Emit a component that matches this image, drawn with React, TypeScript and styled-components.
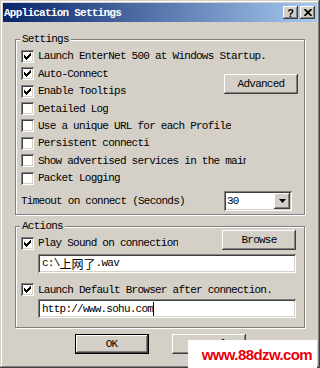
import React from "react";
import styled, { createGlobalStyle } from "styled-components";

const face = "#d4d0c8";
const shadow = "#808080";
const dark = "#404040";
const mono = `"Liberation Mono", "Noto Sans CJK SC", monospace`;

const raised = `box-shadow: inset -1px -1px ${dark}, inset 1px 1px #fff, inset -2px -2px ${shadow}, inset 2px 2px ${face};`;
const sunken = `box-shadow: inset 1px 1px ${shadow}, inset -1px -1px #fff, inset 2px 2px ${dark}, inset -2px -2px ${face};`;

const GlobalStyle = createGlobalStyle`
	html, body {
		margin: 0;
		padding: 0;
		background: #fff;
	}
`;

const Window = styled.div`
	position: relative;
	width: 320px;
	height: 368px;
	box-sizing: border-box;
	padding: 3px;
	display: flex;
	flex-direction: column;
	overflow: hidden;
	background: ${face};
	box-shadow: inset -1px -1px ${dark}, inset 1px 1px ${face}, inset -2px -2px ${shadow}, inset 2px 2px #fff;
	font-family: ${mono};
	font-size: 11px;
	letter-spacing: -0.75px;
	color: #000;
`;

const TitleBar = styled.div`
	height: 19px;
	flex: none;
	display: flex;
	align-items: center;
	padding: 0 2px 0 1px;
	background: linear-gradient(to right, #0a246a, #a6caf0);
	color: #fff;
	font-weight: bold;

	.caption {
		flex: 1;
	}
`;

const CaptionButton = styled.div`
	width: 15px;
	height: 13px;
	margin-left: 2px;
	display: flex;
	align-items: center;
	justify-content: center;
	background: ${face};
	${raised}
	color: #000;
	font-family: "Liberation Sans", sans-serif;
	font-weight: bold;
	font-size: 11px;
	letter-spacing: 0;
`;

const Body = styled.div`
	display: flex;
	flex-direction: column;
	padding: 0 12px;
`;

const GroupBox = styled.div<{ $top: number; $pb: number }>`
	margin-top: ${(p) => p.$top}px;
	padding: 0 8px ${(p) => p.$pb}px 5px;
	border: 1px solid ${shadow};
	box-shadow: inset 1px 1px #fff, 1px 1px #fff;
`;

const GroupLabel = styled.div`
	width: fit-content;
	margin: -7px 0 0 -1px;
	padding: 0 2px;
	line-height: 12px;
	background: ${face};
`;

const SettingsGrid = styled.div`
	display: grid;
	grid-template-columns: 1fr 74px;
	grid-auto-rows: 17.45px;
	margin-top: 2.5px;
	margin-right: -2px;

	.wide {
		grid-column: 1 / -1;
	}

	.side {
		grid-column: 2;
		grid-row: 2 / span 2;
		align-self: center;
		margin-top: 3px;
	}
`;

const CheckRow = styled.div`
	height: 17.45px;
	display: flex;
	align-items: center;
	white-space: nowrap;
	min-width: 0;
`;

const Box = styled.div`
	width: 13px;
	height: 13px;
	flex: none;
	margin-right: 4px;
	background: #fff;
	${sunken}

	svg {
		display: block;
	}
`;

const Label = styled.span<{ $clip?: number }>`
	white-space: nowrap;
	overflow: hidden;
	max-width: ${(p) => (p.$clip ? `${p.$clip}px` : "none")};
`;

const Button = styled.div<{ $default?: boolean }>`
	width: 74px;
	height: 20px;
	box-sizing: border-box;
	display: flex;
	align-items: center;
	justify-content: center;
	background: ${face};
	${raised}
	border: ${(p) => (p.$default ? "1px solid #000" : "none")};
`;

const TimeoutRow = styled.div`
	display: flex;
	align-items: center;
	justify-content: space-between;
	margin-top: 3.5px;
	padding-right: 4px;
`;

const Combo = styled.div`
	width: 68px;
	height: 20px;
	box-sizing: border-box;
	padding: 2px;
	display: flex;
	align-items: stretch;
	background: #fff;
	${sunken}

	.value {
		flex: 1;
		display: flex;
		align-items: center;
		padding-left: 1px;
	}
`;

const ArrowButton = styled.div`
	width: 16px;
	display: flex;
	align-items: center;
	justify-content: center;
	background: ${face};
	${raised}
`;

const ActionTop = styled.div`
	display: flex;
	align-items: flex-start;
	justify-content: space-between;
	margin-top: -2px;

	${CheckRow} {
		margin-top: 5px;
	}
`;

const TextBox = styled.div<{ $gap: number }>`
	height: 19px;
	margin: ${(p) => p.$gap}px 0 0 17px;
	padding: 0 3px 0 4px;
	display: flex;
	align-items: center;
	background: #fff;
	${sunken}
	white-space: nowrap;

	.cjk {
		font-family: "Noto Sans CJK SC", sans-serif;
		font-size: 12px;
		letter-spacing: 0;
	}
`;

const Caret = styled.span`
	width: 1px;
	height: 14px;
	background: #000;
`;

const Spaced = styled.div<{ $gap: number }>`
	margin-top: ${(p) => p.$gap}px;
`;

const Footer = styled.div`
	display: flex;
	justify-content: center;
	gap: 23px;
	margin-top: 6px;
`;

const Watermark = styled.div`
	position: absolute;
	left: 188px;
	top: 340px;
	width: 129px;
	height: 28px;
	display: flex;
	align-items: center;
	justify-content: flex-end;
	padding-right: 5px;
	box-sizing: border-box;
	background: #fff;
	color: #e8000b;
	font-family: "Liberation Sans", Arial, sans-serif;
	font-weight: bold;
	font-size: 15px;
	letter-spacing: -0.6px;
`;

const checkCols = [5, 6, 7, 6, 5, 4, 3];

const Check = ({ on, label, clip }: { on?: boolean; label: string; clip?: number }) => (
	<CheckRow>
		<Box>
			{on && (
				<svg width="13" height="13" viewBox="0 0 13 13" shapeRendering="crispEdges">
					{checkCols.map((y, i) => (
						<rect key={i} x={3 + i} y={y} width="1" height="3" fill="#000" />
					))}
				</svg>
			)}
		</Box>
		<Label $clip={clip}>{label}</Label>
	</CheckRow>
);

const App = () => {
	return (
		<Window>
			<GlobalStyle />
			<TitleBar>
				<span className="caption">Application Settings</span>
				<CaptionButton>?</CaptionButton>
				<CaptionButton>
					<svg width="8" height="7" viewBox="0 0 8 7">
						<path d="M0.5 0 L7.5 7 M7.5 0 L0.5 7" stroke="#000" strokeWidth="1.8" />
					</svg>
				</CaptionButton>
			</TitleBar>
			<Body>
				<GroupBox $top={17} $pb={3}>
					<GroupLabel>Settings</GroupLabel>
					<SettingsGrid>
						<div className="wide">
							<Check on label="Launch EnterNet 500 at Windows Startup." />
						</div>
						<Check on label="Auto-Connect" />
						<Check on label="Enable Tooltips" />
						<Check label="Detailed Log" />
						<div className="wide">
							<Check label="Use a unique URL for each Profile" />
						</div>
						<div className="wide">
							<Check label="Persistent connection" clip={112} />
						</div>
						<div className="wide">
							<Check label="Show advertised services in the main window" clip={208} />
						</div>
						<Check label="Packet Logging" />
						<Button className="side">Advanced</Button>
					</SettingsGrid>
					<TimeoutRow>
						<span>Timeout on connect (Seconds)</span>
						<Combo>
							<span className="value">30</span>
							<ArrowButton>
								<svg width="7" height="4" viewBox="0 0 7 4">
									<path d="M0 0 H7 L3.5 4 Z" fill="#000" />
								</svg>
							</ArrowButton>
						</Combo>
					</TimeoutRow>
				</GroupBox>
				<GroupBox $top={11} $pb={9}>
					<GroupLabel>Actions</GroupLabel>
					<ActionTop>
						<Check on label="Play Sound on connection" />
						<Button>Browse</Button>
					</ActionTop>
					<TextBox $gap={2}>
						c:\<span className="cjk">上网了</span>.wav
					</TextBox>
					<Spaced $gap={8}>
						<Check on label="Launch Default Browser after connection." />
					</Spaced>
					<TextBox $gap={1}>
						http://www.sohu.com
						<Caret />
					</TextBox>
				</GroupBox>
				<Footer>
					<Button $default>OK</Button>
					<Button>Cancel</Button>
				</Footer>
			</Body>
			<Watermark>www.88dzw.com</Watermark>
		</Window>
	);
};

export default App;
